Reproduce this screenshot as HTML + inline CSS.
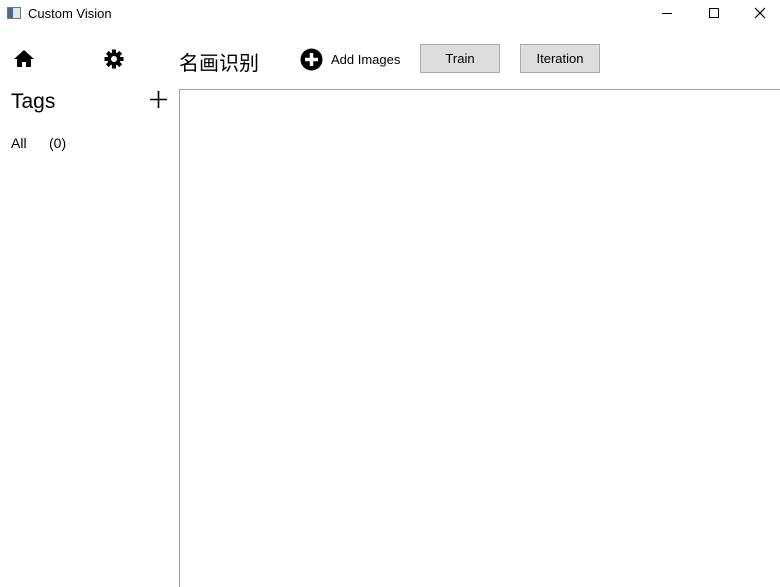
<!DOCTYPE html>
<html><head><meta charset="utf-8"><style>
*{margin:0;padding:0;box-sizing:border-box}
body{width:780px;height:587px;background:#fff;position:relative;overflow:hidden;font-family:"Liberation Sans","Noto Sans CJK SC",sans-serif;color:#000}
.a{position:absolute}
.btn{position:absolute;top:44px;height:29px;width:80px;background:#ddd;border:1px solid #adadad;font-size:13px;text-align:center;line-height:28px}
</style></head><body>
<div class="a" style="left:7px;top:7px;width:14px;height:12px;border:1px solid #6a7a8a;background:linear-gradient(90deg,#4a6a8a 0 40%,#dfe6ee 40%)"></div>
<div class="a" style="left:28px;top:6px;font-size:13px">Custom Vision</div>
<div class="a" style="left:662px;top:13px;width:10px;height:1px;background:#000"></div>
<div class="a" style="left:709px;top:8px;width:10px;height:10px;border:1px solid #000"></div>
<svg class="a" style="left:754px;top:7px" width="12" height="12"><path d="M1 1L11 11M11 1L1 11" stroke="#000" stroke-width="1.2"/></svg>
<svg class="a" style="left:14px;top:49px" width="20" height="20" viewBox="0 0 20 20"><path d="M10 1L0 10h3v8h5v-5h4v5h5v-8h3z" fill="#000"/></svg>
<svg class="a" style="left:104px;top:49px" width="20" height="20" viewBox="0 0 20 20"><g fill="#000"><circle cx="10" cy="10" r="6.5"/><rect x="8" y="0.5" width="4" height="19"/><rect x="0.5" y="8" width="19" height="4"/><rect x="8" y="0.5" width="4" height="19" transform="rotate(45 10 10)"/><rect x="8" y="0.5" width="4" height="19" transform="rotate(-45 10 10)"/></g><circle cx="10" cy="10" r="3" fill="#fff"/></svg>
<div class="a" style="left:179px;top:47px;font-size:20px">名画识别</div>
<svg class="a" style="left:300px;top:48px" width="23" height="23" viewBox="0 0 23 23"><circle cx="11.5" cy="11.5" r="11" fill="#000"/><path d="M11.5 5v13M5 11.5h13" stroke="#fff" stroke-width="3.5"/></svg>
<div class="a" style="left:331px;top:52px;font-size:13px">Add Images</div>
<div class="btn" style="left:420px">Train</div>
<div class="btn" style="left:520px">Iteration</div>
<div class="a" style="left:11px;top:90px;font-size:21px">Tags</div>
<svg class="a" style="left:150px;top:91px" width="17" height="17"><path d="M8.5 0v17M0 8.5h17" stroke="#000" stroke-width="1.6"/></svg>
<div class="a" style="left:11px;top:135px;font-size:14px">All</div>
<div class="a" style="left:49px;top:135px;font-size:14px">(0)</div>
<div class="a" style="left:179px;top:89px;width:601px;height:498px;border-top:1px solid #a0a0a0;border-left:1px solid #a0a0a0"></div>
</body></html>
